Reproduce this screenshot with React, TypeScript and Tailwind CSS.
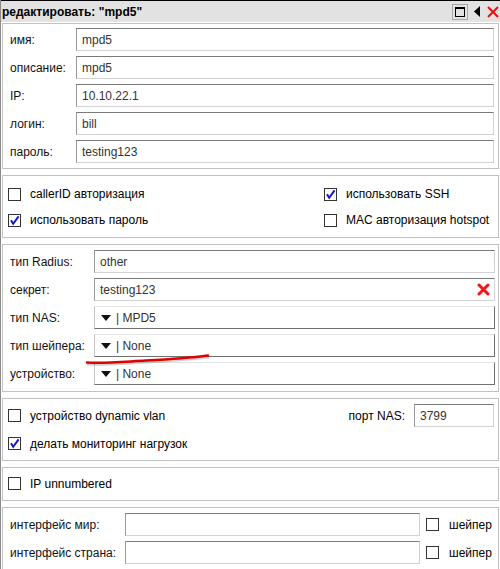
import type { ReactNode } from "react";

function Check({ checked = false }: { checked?: boolean }) {
  return (
    <span className="flex h-[13px] w-[13px] shrink-0 items-center justify-center border border-[#333] bg-white">
      {checked && (
        <svg width="11" height="11" viewBox="0 0 11 11">
          <path d="M2 5.2 L4.2 8.8 L9.6 1.4" fill="none" stroke="#1515c8" strokeWidth="2" />
        </svg>
      )}
    </span>
  );
}

function CheckRow({ checked, label }: { checked?: boolean; label: string }) {
  return (
    <div className="flex h-[20px] items-center gap-[9px]">
      <Check checked={checked} />
      <span>{label}</span>
    </div>
  );
}

function Field({ value, children }: { value?: string; children?: ReactNode }) {
  return (
    <div className="flex h-[23px] items-center justify-between border border-t-[#7a7a7a] border-l-[#9a9a9a] border-r-[#d2d2d2] border-b-[#d2d2d2] bg-white pl-[5px] pr-[4px] text-[#333]">
      <span>{value}</span>
      {children}
    </div>
  );
}

function Select({ value }: { value: string }) {
  return (
    <div className="flex h-[23px] items-center gap-[5px] border border-t-[#e4e4e4] border-l-[#c4c4c4] border-r-[#707070] border-b-[#707070] bg-white pl-[6px] text-[#333]">
      <svg width="10" height="6" viewBox="0 0 10 6">
        <path d="M0 0 L10 0 L5 6 Z" fill="#111" />
      </svg>
      <span>| {value}</span>
    </div>
  );
}

function Label({ children }: { children: ReactNode }) {
  return <span className="pl-[7px] text-[#111]">{children}</span>;
}

function Section({ className, children }: { className?: string; children: ReactNode }) {
  return <div className={`border border-[#c2c2c2] ${className ?? ""}`}>{children}</div>;
}

export default function App() {
  return (
    <div className="relative h-[569px] w-[500px] overflow-hidden border-l border-[#8a8a8a] bg-white font-['Liberation_Sans',Arial,sans-serif] text-[12px] text-black">
      {/* Title bar */}
      <div className="flex h-[22px] items-center justify-between border-t border-black bg-[#e2e2e2] pl-[1px] pr-[1px]">
        <span className="font-bold">редактировать: "mpd5"</span>
        <div className="flex items-center">
          <div className="flex h-[16px] w-[16px] items-center justify-center border border-[#a8a8a8]">
            <div className="h-[10px] w-[10px] border border-t-2 border-black" />
          </div>
          <svg className="ml-[6px]" width="7" height="11" viewBox="0 0 7 11">
            <path d="M6 0 L0 5.5 L6 11 Z" fill="#000" />
          </svg>
          <svg className="ml-[6px]" width="12" height="12" viewBox="0 0 12 12">
            <path d="M1 1 L11 11 M11 1 L1 11" stroke="#f01010" strokeWidth="2" />
          </svg>
        </div>
      </div>

      <div className="flex flex-col gap-[6px] px-[1px] pt-[1px]">
        {/* Section 1 */}
        <Section className="pb-[5px] pr-[4px] pt-[4px]">
          <div className="grid grid-cols-[73px_1fr] items-center gap-y-[5px]">
            <Label>имя:</Label>
            <Field value="mpd5" />
            <Label>описание:</Label>
            <Field value="mpd5" />
            <Label>IP:</Label>
            <Field value="10.10.22.1" />
            <Label>логин:</Label>
            <Field value="bill" />
            <Label>пароль:</Label>
            <Field value="testing123" />
          </div>
        </Section>

        {/* Section 2 */}
        <Section className="pb-[7px] pl-[5px] pt-[8px]">
          <div className="grid grid-cols-[316px_1fr] gap-y-[6px]">
            <CheckRow label="callerID авторизация" />
            <CheckRow checked label="использовать SSH" />
            <CheckRow checked label="использовать пароль" />
            <CheckRow label="MAC авторизация hotspot" />
          </div>
        </Section>

        {/* Section 3 */}
        <Section className="pb-[6px] pr-[3px] pt-[5px]">
          <div className="grid grid-cols-[91px_1fr] items-center gap-y-[5px]">
            <Label>тип Radius:</Label>
            <Field value="other" />
            <Label>секрет:</Label>
            <Field value="testing123">
              <svg width="13" height="13" viewBox="0 0 13 13">
                <path d="M2 2 L11 11 M11 2 L2 11" stroke="#f41515" strokeWidth="3" strokeLinecap="round" />
              </svg>
            </Field>
            <Label>тип NAS:</Label>
            <Select value="MPD5" />
            <Label>тип шейпера:</Label>
            <Select value="None" />
            <Label>устройство:</Label>
            <Select value="None" />
          </div>
        </Section>

        {/* Section 4 */}
        <Section className="flex flex-col gap-[5px] pb-[5px] pl-[5px] pr-[4px] pt-[5px]">
          <div className="flex h-[23px] items-center">
            <CheckRow label="устройство dynamic vlan" />
            <div className="ml-auto flex items-center gap-[9px]">
              <span>порт NAS:</span>
              <div className="w-[80px]">
                <Field value="3799" />
              </div>
            </div>
          </div>
          <div className="flex h-[23px] items-center">
            <CheckRow checked label="делать мониторинг нагрузок" />
          </div>
        </Section>

        {/* Section 5 */}
        <Section className="pb-[5px] pl-[5px] pt-[4px]">
          <div className="flex h-[23px] items-center">
            <CheckRow label="IP unnumbered" />
          </div>
        </Section>

        {/* Section 6 */}
        <Section className="pb-[5px] pt-[5px]">
          <div className="grid grid-cols-[122px_295px_auto] items-center gap-y-[5px]">
            <Label>интерфейс мир:</Label>
            <Field />
            <div className="ml-[6px] flex items-center gap-[10px]">
              <Check />
              <span>шейпер</span>
            </div>
            <Label>интерфейс страна:</Label>
            <Field />
            <div className="ml-[6px] flex items-center gap-[10px]">
              <Check />
              <span>шейпер</span>
            </div>
          </div>
        </Section>
      </div>

      {/* hand-drawn red underline annotation */}
      <svg className="pointer-events-none absolute left-0 top-0" width="500" height="569">
        <path
          d="M87 364 C 105 365, 125 363, 145 362 S 185 360, 207 357"
          fill="none"
          stroke="rgba(0,0,0,0.18)"
          strokeWidth="3"
          strokeLinecap="round"
        />
        <path
          d="M86 362.5 C 105 363.5, 125 361.5, 145 360.5 S 185 358.5, 207 355.5"
          fill="none"
          stroke="#e00000"
          strokeWidth="2.5"
          strokeLinecap="round"
        />
      </svg>
    </div>
  );
}
